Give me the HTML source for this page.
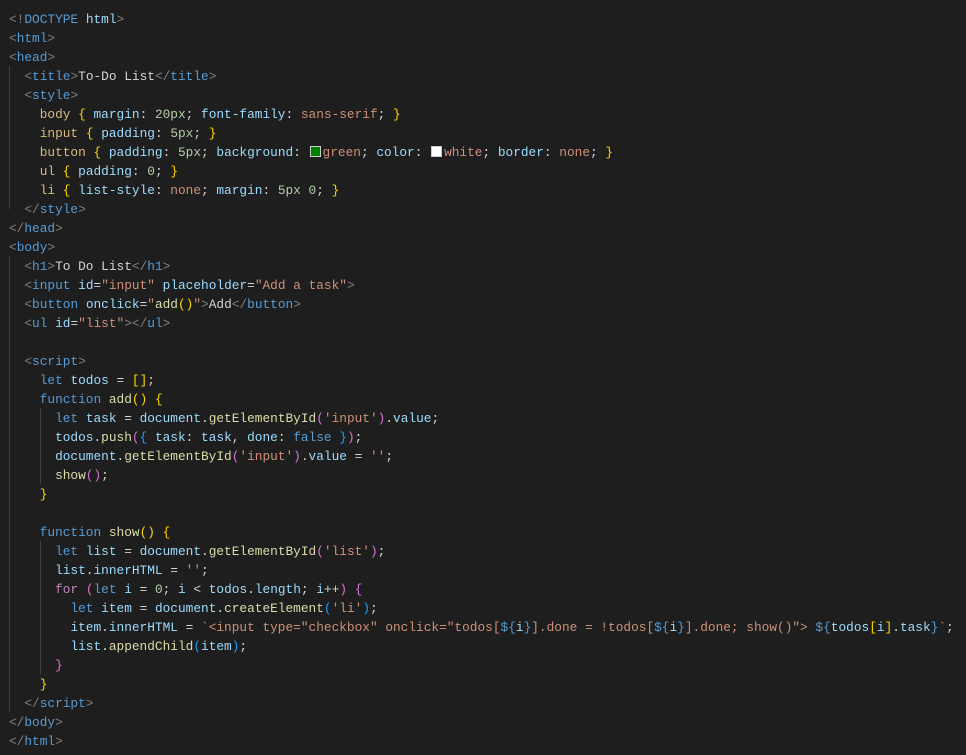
<!DOCTYPE html>
<html><head><style>
html,body{margin:0;padding:0;background:#1e1e1e;width:966px;height:755px;overflow:hidden}
pre{margin:0;padding:10px 0 0 9px;font-family:"Liberation Mono",monospace;font-size:12.8px;line-height:19px;color:#d4d4d4;position:relative}
.g{color:#808080}.t{color:#569cd6}.a{color:#9cdcfe}.s{color:#ce9178}.sel{color:#d7ba7d}.n{color:#b5cea8}
.k{color:#569cd6}.c{color:#c586c0}.f{color:#dcdcaa}.v{color:#9cdcfe}.y{color:#ffd700}.p{color:#da70d6}.b{color:#179fff}.w{color:#d4d4d4}
.sw{display:inline-block;width:9px;height:9px;border:1px solid #ccc;vertical-align:-1px;margin:0 2px 0 1px}
.guide{position:absolute;width:1px;background:#404040}
</style></head><body>
<div class="guide" style="left:9px;top:66px;height:143px"></div>
<div class="guide" style="left:9px;top:256px;height:456px"></div>
<div class="guide" style="left:40px;top:408px;height:76px"></div>
<div class="guide" style="left:40px;top:541px;height:133px"></div>
<pre><span class="g">&lt;!</span><span class="t">DOCTYPE</span> <span class="a">html</span><span class="g">&gt;</span>
<span class="g">&lt;</span><span class="t">html</span><span class="g">&gt;</span>
<span class="g">&lt;</span><span class="t">head</span><span class="g">&gt;</span>
  <span class="g">&lt;</span><span class="t">title</span><span class="g">&gt;</span>To-Do List<span class="g">&lt;/</span><span class="t">title</span><span class="g">&gt;</span>
  <span class="g">&lt;</span><span class="t">style</span><span class="g">&gt;</span>
    <span class="sel">body</span> <span class="y">{</span> <span class="a">margin</span>: <span class="n">20px</span>; <span class="a">font-family</span>: <span class="s">sans-serif</span>; <span class="y">}</span>
    <span class="sel">input</span> <span class="y">{</span> <span class="a">padding</span>: <span class="n">5px</span>; <span class="y">}</span>
    <span class="sel">button</span> <span class="y">{</span> <span class="a">padding</span>: <span class="n">5px</span>; <span class="a">background</span>: <span class="sw" style="background:green"></span><span class="s">green</span>; <span class="a">color</span>: <span class="sw" style="background:#fff"></span><span class="s">white</span>; <span class="a">border</span>: <span class="s">none</span>; <span class="y">}</span>
    <span class="sel">ul</span> <span class="y">{</span> <span class="a">padding</span>: <span class="n">0</span>; <span class="y">}</span>
    <span class="sel">li</span> <span class="y">{</span> <span class="a">list-style</span>: <span class="s">none</span>; <span class="a">margin</span>: <span class="n">5px</span> <span class="n">0</span>; <span class="y">}</span>
  <span class="g">&lt;/</span><span class="t">style</span><span class="g">&gt;</span>
<span class="g">&lt;/</span><span class="t">head</span><span class="g">&gt;</span>
<span class="g">&lt;</span><span class="t">body</span><span class="g">&gt;</span>
  <span class="g">&lt;</span><span class="t">h1</span><span class="g">&gt;</span>To Do List<span class="g">&lt;/</span><span class="t">h1</span><span class="g">&gt;</span>
  <span class="g">&lt;</span><span class="t">input</span> <span class="a">id</span>=<span class="s">"input"</span> <span class="a">placeholder</span>=<span class="s">"Add a task"</span><span class="g">&gt;</span>
  <span class="g">&lt;</span><span class="t">button</span> <span class="a">onclick</span>=<span class="s">"</span><span class="f">add</span><span class="y">()</span><span class="s">"</span><span class="g">&gt;</span>Add<span class="g">&lt;/</span><span class="t">button</span><span class="g">&gt;</span>
  <span class="g">&lt;</span><span class="t">ul</span> <span class="a">id</span>=<span class="s">"list"</span><span class="g">&gt;&lt;/</span><span class="t">ul</span><span class="g">&gt;</span>

  <span class="g">&lt;</span><span class="t">script</span><span class="g">&gt;</span>
    <span class="k">let</span> <span class="v">todos</span> = <span class="y">[]</span>;
    <span class="k">function</span> <span class="f">add</span><span class="y">()</span> <span class="y">{</span>
      <span class="k">let</span> <span class="v">task</span> = <span class="v">document</span>.<span class="f">getElementById</span><span class="p">(</span><span class="s">'input'</span><span class="p">)</span>.<span class="v">value</span>;
      <span class="v">todos</span>.<span class="f">push</span><span class="p">(</span><span class="b">{</span> <span class="v">task</span>: <span class="v">task</span>, <span class="v">done</span>: <span class="k">false</span> <span class="b">}</span><span class="p">)</span>;
      <span class="v">document</span>.<span class="f">getElementById</span><span class="p">(</span><span class="s">'input'</span><span class="p">)</span>.<span class="v">value</span> = <span class="s">''</span>;
      <span class="f">show</span><span class="p">()</span>;
    <span class="y">}</span>

    <span class="k">function</span> <span class="f">show</span><span class="y">()</span> <span class="y">{</span>
      <span class="k">let</span> <span class="v">list</span> = <span class="v">document</span>.<span class="f">getElementById</span><span class="p">(</span><span class="s">'list'</span><span class="p">)</span>;
      <span class="v">list</span>.<span class="v">innerHTML</span> = <span class="s">''</span>;
      <span class="c">for</span> <span class="p">(</span><span class="k">let</span> <span class="v">i</span> = <span class="n">0</span>; <span class="v">i</span> &lt; <span class="v">todos</span>.<span class="v">length</span>; <span class="v">i</span>++<span class="p">)</span> <span class="p">{</span>
        <span class="k">let</span> <span class="v">item</span> = <span class="v">document</span>.<span class="f">createElement</span><span class="b">(</span><span class="s">'li'</span><span class="b">)</span>;
        <span class="v">item</span>.<span class="v">innerHTML</span> = <span class="s">`&lt;input type="checkbox" onclick="todos[</span><span class="k">${</span><span class="v">i</span><span class="k">}</span><span class="s">].done = !todos[</span><span class="k">${</span><span class="v">i</span><span class="k">}</span><span class="s">].done; show()"&gt; </span><span class="k">${</span><span class="v">todos</span><span class="y">[</span><span class="v">i</span><span class="y">]</span>.<span class="v">task</span><span class="k">}</span><span class="s">`</span>;
        <span class="v">list</span>.<span class="f">appendChild</span><span class="b">(</span><span class="v">item</span><span class="b">)</span>;
      <span class="p">}</span>
    <span class="y">}</span>
  <span class="g">&lt;/</span><span class="t">script</span><span class="g">&gt;</span>
<span class="g">&lt;/</span><span class="t">body</span><span class="g">&gt;</span>
<span class="g">&lt;/</span><span class="t">html</span><span class="g">&gt;</span></pre>
</body></html>
